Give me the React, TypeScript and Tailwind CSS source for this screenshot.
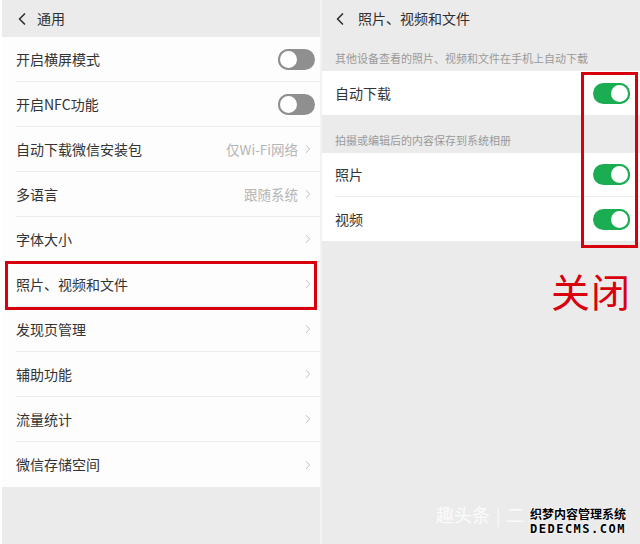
import { ChevronLeft, ChevronRight } from "lucide-react";

const font = { fontFamily: '"Noto Sans CJK SC", "Noto Sans", sans-serif' };

type Row = { label: string; toggle?: boolean; value?: string };

const rows: Row[] = [
  { label: "开启横屏模式", toggle: true },
  { label: "开启NFC功能", toggle: true },
  { label: "自动下载微信安装包", value: "仅Wi-Fi网络" },
  { label: "多语言", value: "跟随系统" },
  { label: "字体大小" },
  { label: "照片、视频和文件" },
  { label: "发现页管理" },
  { label: "辅助功能" },
  { label: "流量统计" },
  { label: "微信存储空间" },
];

function SwitchOff() {
  return (
    <div className="w-[37px] h-[21px] rounded-full bg-[#8f8f8f] flex items-center">
      <div className="w-[21px] h-[21px] rounded-full bg-white border-2 border-[#8f8f8f]" />
    </div>
  );
}

function SwitchOn() {
  return (
    <div className="w-[37px] h-[21px] rounded-full bg-[#1aad52] flex items-center justify-end">
      <div className="w-[21px] h-[21px] rounded-full bg-white border-2 border-[#1aad52]" />
    </div>
  );
}

function LeftPanel() {
  return (
    <div className="w-[320px] h-full border-l-2 border-white flex flex-col relative">
      <div className="h-[37px] flex items-center pl-[10px] text-[#2f2f2f]">
        <ChevronLeft size={20} strokeWidth={2} />
        <span className="ml-[5px] text-[14px]">通用</span>
      </div>
      <div className="bg-[#fdfdfd]">
        {rows.map((r, i) => (
          <div key={r.label} className="h-[45px] pl-[14px] flex">
            <div
              className={
                "flex-1 flex items-center pr-[5px] " +
                (i < rows.length - 1 ? "border-b border-[#ececec]" : "")
              }
            >
              <span className="flex-1 text-[14px] text-[#333]">{r.label}</span>
              {r.toggle ? (
                <SwitchOff />
              ) : (
                <div className="flex items-center text-[#b5b5b5]">
                  {r.value && <span className="text-[13.5px] mr-[3px]">{r.value}</span>}
                  <ChevronRight size={14} strokeWidth={1.5} />
                </div>
              )}
            </div>
          </div>
        ))}
      </div>
      <div className="absolute left-[3px] top-[261px] w-[312px] h-[49px] border-[3px] border-[#d9000d]" />
    </div>
  );
}

function RightPanel() {
  return (
    <div className="flex-1 h-full flex flex-col relative">
      <div className="h-[37px] flex items-center pl-[8px] text-[#2f2f2f]">
        <ChevronLeft size={20} strokeWidth={2} />
        <span className="ml-[8px] text-[14px]">照片、视频和文件</span>
      </div>
      <div className="h-[34px] flex items-end pb-[5px] pl-[13px] text-[11px] text-[#9a9a9a]">
        其他设备查看的照片、视频和文件在手机上自动下载
      </div>
      <div className="bg-white h-[44px] pl-[13px] pr-[10px] flex items-center">
        <span className="flex-1 text-[14px] text-[#333]">自动下载</span>
        <SwitchOn />
      </div>
      <div className="h-[38px] flex items-end pb-[5px] pl-[13px] text-[11px] text-[#9a9a9a]">
        拍摄或编辑后的内容保存到系统相册
      </div>
      <div className="bg-white">
        <div className="h-[44px] pl-[13px] flex">
          <div className="flex-1 flex items-center pr-[10px] border-b border-[#ececec]">
            <span className="flex-1 text-[14px] text-[#333]">照片</span>
            <SwitchOn />
          </div>
        </div>
        <div className="h-[44px] pl-[13px] pr-[10px] flex items-center">
          <span className="flex-1 text-[14px] text-[#333]">视频</span>
          <SwitchOn />
        </div>
      </div>
      <div className="flex justify-end pr-[9px] pt-[30px]">
        <span className="text-[39px] leading-none text-[#d9000d] tracking-[1px]">关闭</span>
      </div>
      <div className="absolute left-[259px] top-[72px] w-[57px] h-[176px] border-[3px] border-[#d9000d]" />
      <div className="absolute left-[114px] bottom-[16px] text-[18px] text-white/80 flex items-center gap-[6px]">
        <span>趣头条</span>
        <span className="text-[16px]">|</span>
        <span>二</span>
      </div>
      <div className="absolute left-[208px] bottom-[9px] flex flex-col items-start leading-none">
        <span className="text-[12px] font-bold text-black [text-shadow:0_0_2px_white,0_0_2px_white]">
          织梦内容管理系统
        </span>
        <span
          className="mt-[3px] text-[12px] font-bold tracking-[1.5px] text-black [text-shadow:0_0_2px_white,0_0_2px_white]"
          style={{ fontFamily: '"DejaVu Sans Mono", monospace' }}
        >
          DEDECMS.COM
        </span>
      </div>
    </div>
  );
}

export default function App() {
  return (
    <div className="w-[640px] h-[544px] bg-[#ebebeb] flex overflow-hidden" style={font}>
      <LeftPanel />
      <div className="w-[2px] h-full bg-[#f2f2f2]" />
      <RightPanel />
    </div>
  );
}
